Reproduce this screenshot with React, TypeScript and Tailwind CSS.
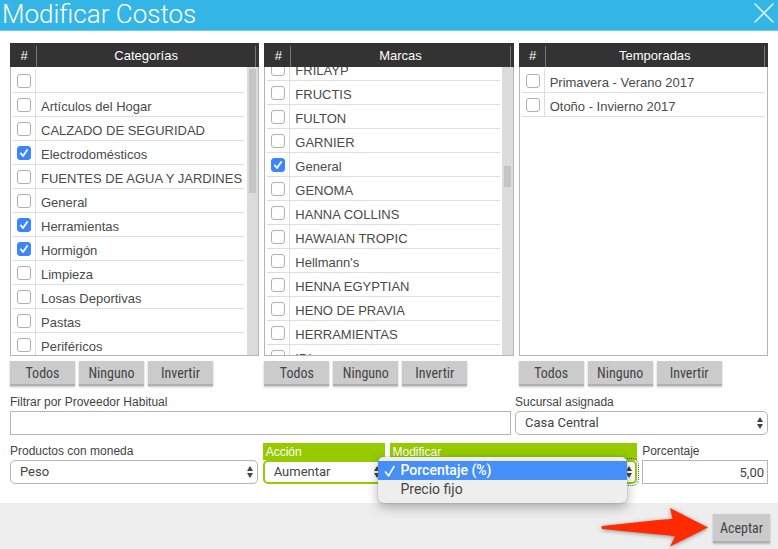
import { useLayoutEffect, useRef, useState, type ReactNode } from 'react';

type Item = { name: string; checked?: boolean };

const categorias: Item[] = [
  { name: '' },
  { name: 'Artículos del Hogar' },
  { name: 'CALZADO DE SEGURIDAD' },
  { name: 'Electrodomésticos', checked: true },
  { name: 'FUENTES DE AGUA Y JARDINES' },
  { name: 'General' },
  { name: 'Herramientas', checked: true },
  { name: 'Hormigón', checked: true },
  { name: 'Limpieza' },
  { name: 'Losas Deportivas' },
  { name: 'Pastas' },
  { name: 'Periféricos' },
];

const marcas: Item[] = [
  { name: 'FRILAYP' },
  { name: 'FRUCTIS' },
  { name: 'FULTON' },
  { name: 'GARNIER' },
  { name: 'General', checked: true },
  { name: 'GENOMA' },
  { name: 'HANNA COLLINS' },
  { name: 'HAWAIAN TROPIC' },
  { name: "Hellmann's" },
  { name: 'HENNA EGYPTIAN' },
  { name: 'HENO DE PRAVIA' },
  { name: 'HERRAMIENTAS' },
  { name: 'IDI' },
];

const temporadas: Item[] = [
  { name: 'Primavera - Verano 2017' },
  { name: 'Otoño - Invierno 2017' },
];

const buttonClass =
  "bg-[#cbcbcb] border-b-2 border-[#b0b0b0] text-[#444] text-[14px] leading-[20px] font-normal font-['Roboto_Condensed','Liberation_Sans_Narrow',Roboto,sans-serif] shadow-[0_1px_2px_rgba(0,0,0,0.25)]";

function PickList({
  id,
  title,
  items,
  scrollTop = 0,
  thumb,
}: {
  id: string;
  title: string;
  items: Item[];
  scrollTop?: number;
  thumb?: string;
}) {
  const [checked, setChecked] = useState(items.map((item) => !!item.checked));
  const body = useRef<HTMLTableSectionElement>(null);

  useLayoutEffect(() => {
    if (body.current) body.current.scrollTop = scrollTop;
  }, [scrollTop]);

  return (
    <section className="min-w-0">
      <div className="relative">
        <table className="block">
          <thead className="block bg-[#333] text-white text-[13px] leading-[20px]">
            <tr className="flex h-6 pt-[3px] pr-[3px]">
              <th className="w-[27px] border-r border-[#777] font-normal pl-[2px]">#</th>
              <th className="flex-1 border-r border-[#777] font-normal">{title}</th>
            </tr>
          </thead>
          <tbody
            ref={body}
            className={`block h-[289px] overflow-hidden border border-t-0 border-[#b5b5b5] pt-[2px] pl-[2px] ${
              thumb ? 'pr-[13px]' : 'pr-[2px]'
            }`}
          >
            {items.map((item, i) => (
              <tr key={i} className="flex h-6 border-b border-[#dedede]">
                <td className="flex w-[23px] items-center justify-center border-r border-[#dedede]">
                  <span className="relative flex">
                    <input
                      id={`${id}-${i}`}
                      type="checkbox"
                      aria-label={item.name || 'Sin nombre'}
                      checked={checked[i]}
                      onChange={() => setChecked(checked.map((c, j) => (j === i ? !c : c)))}
                      className="size-[14px] appearance-none rounded-[3px] border border-[#b0b0b0] bg-white checked:border-[#3b86fb] checked:bg-[#3b86fb]"
                    />
                    {checked[i] && (
                      <svg viewBox="0 0 14 14" className="pointer-events-none absolute inset-0 size-[14px]" fill="none" stroke="#fff" strokeWidth="1.8" strokeLinecap="round" strokeLinejoin="round">
                        <path d="M3.800 7.400l2.200 2.600 4.200-6" />
                      </svg>
                    )}
                  </span>
                </td>
                <td className="min-w-0 flex-1 pl-[5px] pt-1 text-[13px] leading-[20px] whitespace-nowrap text-[#4a4a4a]">
                  <label htmlFor={`${id}-${i}`}>{item.name}</label>
                </td>
              </tr>
            ))}
          </tbody>
        </table>
        {thumb && (
          <div className="absolute top-6 right-px bottom-px w-[11px] bg-[#dcdcdc] px-[2px]">
            <div className={`w-full bg-[#c4c4c4] ${thumb}`} />
          </div>
        )}
      </div>
      <div className="mt-[5px] flex gap-1">
        <button className={`h-[25px] w-[65px] ${buttonClass}`} onClick={() => setChecked(items.map(() => true))}>
          Todos
        </button>
        <button className={`h-[25px] w-[65px] ${buttonClass}`} onClick={() => setChecked(items.map(() => false))}>
          Ninguno
        </button>
        <button className={`h-[25px] w-[65px] ${buttonClass}`} onClick={() => setChecked(checked.map((c) => !c))}>
          Invertir
        </button>
      </div>
    </section>
  );
}

function Field({ id, label, active, children }: { id: string; label: string; active?: boolean; children: ReactNode }) {
  return (
    <div className="relative min-w-0">
      <label
        htmlFor={id}
        className={`block h-[17px] text-[12px] whitespace-nowrap ${
          active ? 'bg-[#97ca00] pl-[3px] leading-[19px] text-white' : 'leading-[17px] text-[#444]'
        }`}
      >
        {label}
      </label>
      {children}
    </div>
  );
}

function Select({ id, options, className }: { id: string; options: string[]; className: string }) {
  return (
    <div className="relative">
      <select
        id={id}
        className={`block h-6 w-full appearance-none rounded-[5px] bg-white pr-4 font-[Roboto,sans-serif] text-[13px] leading-[20px] text-[#444] ${className}`}
      >
        {options.map((o) => (
          <option key={o}>{o}</option>
        ))}
      </select>
      <svg viewBox="0 0 6 12" className="pointer-events-none absolute top-[6px] right-[5px] h-3 w-[6px]" fill="#444">
        <path d="M3 0l3 5H0zM3 12l3-5H0z" />
      </svg>
    </div>
  );
}

export default function App() {
  return (
    <div className="flex min-h-screen flex-col bg-white font-['Liberation_Sans',Arial,sans-serif]">
      <header className="flex h-[31px] items-start justify-between border-b border-[#6cc8ec] bg-[#33b5e5] pr-1 pl-[2px]">
        <h1 className="font-[Roboto,sans-serif] text-[26px] leading-[28px] font-light text-white">Modificar Costos</h1>
        <button aria-label="Cerrar" className="mt-[3px]">
          <svg viewBox="0 0 20 20" className="size-5" stroke="#d6f0fa" strokeWidth="1.6" strokeLinecap="round">
            <path d="M1 1l18 18M19 1L1 19" />
          </svg>
        </button>
      </header>

      <main className="px-[10px] pt-3 pb-[19px]">
        <div className="grid grid-cols-3 gap-[5px]">
          <PickList id="categorias" title="Categorías" items={categorias} thumb="mt-[2px] h-[124px]" />
          <PickList id="marcas" title="Marcas" items={marcas} scrollTop={12} thumb="mt-[99px] h-[21px]" />
          <PickList id="temporadas" title="Temporadas" items={temporadas} />
        </div>

        <div className="mt-2 grid grid-cols-[501fr_253fr] gap-1">
          <Field id="proveedor" label="Filtrar por Proveedor Habitual">
            <input id="proveedor" type="text" className="block h-6 w-full border border-[#b5b5b5] px-2 text-[14px]" />
          </Field>
          <Field id="sucursal" label="Sucursal asignada">
            <Select id="sucursal" options={['Casa Central']} className="border border-[#b5b5b5] pl-[9px]" />
          </Field>
        </div>

        <div className="mt-2 grid grid-cols-[248fr_122fr_248fr_126fr] gap-[5px]">
          <Field id="moneda" label="Productos con moneda">
            <Select id="moneda" options={['Peso']} className="border border-[#b5b5b5] pl-[9px]" />
          </Field>
          <Field id="accion" label="Acción" active>
            <Select id="accion" options={['Aumentar']} className="border-2 border-[#97ca00] pl-[9px]" />
          </Field>
          <Field id="modificar" label="Modificar" active>
            <Select
              id="modificar"
              options={['Porcentaje (%)', 'Precio fijo']}
              className="border-2 border-[#97ca00] pl-[9px] outline-1 outline-offset-1 outline-dotted outline-[#2b5c8a]"
            />
            <ul
              role="listbox"
              aria-label="Modificar"
              className="absolute top-[14px] right-[10px] -left-3 z-10 rounded-[5px] bg-[#eeeeec] py-1 font-[Roboto,sans-serif] text-[14px] leading-[19px] text-[#444] shadow-[0_4px_12px_rgba(0,0,0,0.3),0_0_1px_rgba(0,0,0,0.5)]"
            >
              <li role="option" aria-selected="true" className="flex items-center gap-[5px] bg-[#468ff8] pl-[6px] font-medium text-white">
                <svg viewBox="0 0 12 12" className="size-3" fill="none" stroke="#fff" strokeWidth="1.6" strokeLinecap="round" strokeLinejoin="round">
                  <path d="M1.500 7l3 3.800L10 1.500" />
                </svg>
                Porcentaje (%)
              </li>
              <li role="option" aria-selected="false" className="pl-[23px]">
                Precio fijo
              </li>
            </ul>
          </Field>
          <Field id="porcentaje" label="Porcentaje">
            <input
              id="porcentaje"
              type="text"
              defaultValue="5,00"
              className="block h-6 w-full border border-[#b5b5b5] px-[3px] text-right font-[Roboto,sans-serif] text-[13px] text-[#444]"
            />
          </Field>
        </div>
      </main>

      <footer className="flex flex-1 items-start justify-end gap-[3px] bg-[#eee] pr-2">
        <svg viewBox="0 0 110 46" className="h-[46px] w-[110px] drop-shadow-[0_1px_2px_rgba(0,0,0,0.4)]" fill="#ff2a00">
          <path d="M2 23L58 17Q72 16 72.500 15.500L70 5L108 24.500L70 43.500L75 33.500Q72 32.500 58 31.500L2 26Q1 24.500 2 23Z" />
        </svg>
        <button className={`mt-[11px] h-[29px] w-[57px] ${buttonClass}`}>Aceptar</button>
      </footer>
    </div>
  );
}
